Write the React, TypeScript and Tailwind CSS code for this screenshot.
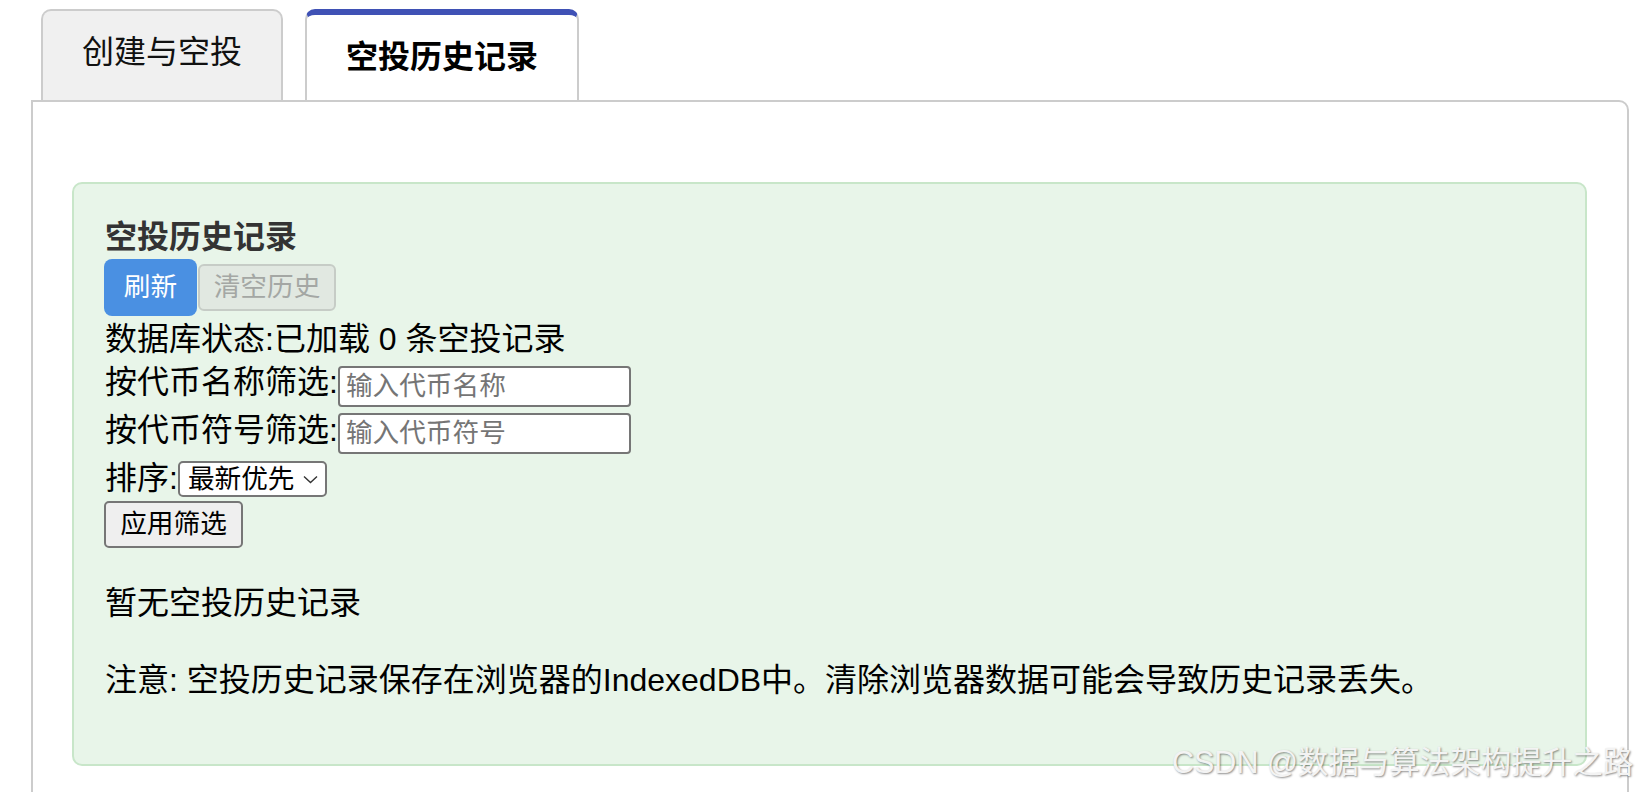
import React, { useState } from "react";

const tabs = ["创建与空投", "空投历史记录"];

const App = () => {
  const [active, setActive] = useState(1);
  const [name, setName] = useState("");
  const [symbol, setSymbol] = useState("");

  return (
    <div className="relative h-[792px] overflow-hidden bg-white pt-[9px] pl-[31px] pr-[15px] font-['Liberation_Sans','Noto_Sans_CJK_SC',sans-serif] text-black">
      <div className="flex gap-[22px] pl-[10px]">
        {tabs.map((t, i) =>
          i === active ? (
            <div
              key={t}
              onClick={() => setActive(i)}
              className="h-[91px] w-[274px] cursor-pointer rounded-t-[10px] border-x-2 border-t-[6px] border-x-[#cccccc] border-t-[#3f51b5] bg-white pt-[26px] text-center text-[32px] leading-[32px] font-bold"
            >
              {t}
            </div>
          ) : (
            <div
              key={t}
              onClick={() => setActive(i)}
              className="h-[91px] w-[242px] cursor-pointer rounded-t-[10px] border-2 border-b-0 border-[#cccccc] bg-[#f0f0f0] pt-[25px] text-center text-[32px] leading-[32px] text-[#111]"
            >
              {t}
            </div>
          )
        )}
      </div>

      <div className="h-[720px] rounded-tr-[10px] border-2 border-[#cccccc] pt-[80px] pl-[39px] pr-[40px]">
        <div className="rounded-[10px] border-2 border-[#c8e6c9] bg-[#e8f5e9] pt-[37px] pl-[30px] pb-[68px]">
          <h3 className="pl-[1px] text-[32px] leading-[32px] font-bold text-[#333]">空投历史记录</h3>

          <div className="mt-[6px] flex h-[57px] items-center">
            <button className="h-[57px] w-[93px] rounded-[8px] bg-[#4a90e2] text-[26.67px] leading-none text-white">
              刷新
            </button>
            <button
              disabled
              className="ml-[1px] h-[47px] w-[138px] rounded-[6px] border-2 border-[#c6ccc6] bg-[#e1e8e1] text-[26.67px] leading-none text-[#a4a7a4]"
            >
              清空历史
            </button>
          </div>

          <div className="flex h-[46px] items-center pl-[1px] text-[32px] leading-[32px]">
            数据库状态:已加载 0 条空投记录
          </div>

          <div className="flex h-[48px] items-center pl-[1px]">
            <span className="mb-[8px] text-[32px] leading-[32px]">按代币名称筛选:</span>
            <input
              value={name}
              onChange={(e) => setName(e.target.value)}
              placeholder="输入代币名称"
              className="h-[41px] w-[293px] rounded-[4px] border-2 border-[#767676] bg-white pl-[6px] text-[26.67px] leading-none outline-none placeholder:text-[#757575]"
            />
          </div>

          <div className="flex h-[47px] items-center pl-[1px]">
            <span className="mb-[8px] text-[32px] leading-[32px]">按代币符号筛选:</span>
            <input
              value={symbol}
              onChange={(e) => setSymbol(e.target.value)}
              placeholder="输入代币符号"
              className="h-[41px] w-[293px] rounded-[4px] border-2 border-[#767676] bg-white pl-[6px] text-[26.67px] leading-none outline-none placeholder:text-[#757575]"
            />
          </div>

          <div className="flex h-[44px] items-center pl-[1px]">
            <span className="mb-[2px] text-[32px] leading-[32px]">排序:</span>
            <div className="flex h-[36px] w-[149px] items-center justify-between rounded-[5px] border-2 border-[#767676] bg-white pl-[8px] pr-[7px] text-[26.67px] leading-none">
              <span>最新优先</span>
              <svg width="15" height="9" viewBox="0 0 15 9" fill="none">
                <path d="M1 1.5l6.5 6 6.5-6" stroke="#333" strokeWidth="1.4" />
              </svg>
            </div>
          </div>

          <div className="flex h-[47px] items-center">
            <button className="h-[47px] w-[139px] rounded-[5px] border-2 border-[#767676] bg-[#efefef] text-[26.67px] leading-none">
              应用筛选
            </button>
          </div>

          <p className="mt-[39px] pl-[1px] text-[32px] leading-[32px]">暂无空投历史记录</p>

          <p className="mt-[45px] pl-[1px] text-[32px] leading-[32px]">
            注意: 空投历史记录保存在浏览器的IndexedDB中。清除浏览器数据可能会导致历史记录丢失。
          </p>
        </div>
      </div>

      <div className="pointer-events-none absolute left-[1172px] top-[747px] whitespace-nowrap text-[30.5px] leading-[31px] text-[#f3f3f3] [text-shadow:1px_1px_2px_rgba(0,0,0,0.45)]">
        CSDN @数据与算法架构提升之路
      </div>
    </div>
  );
};

export default App;
